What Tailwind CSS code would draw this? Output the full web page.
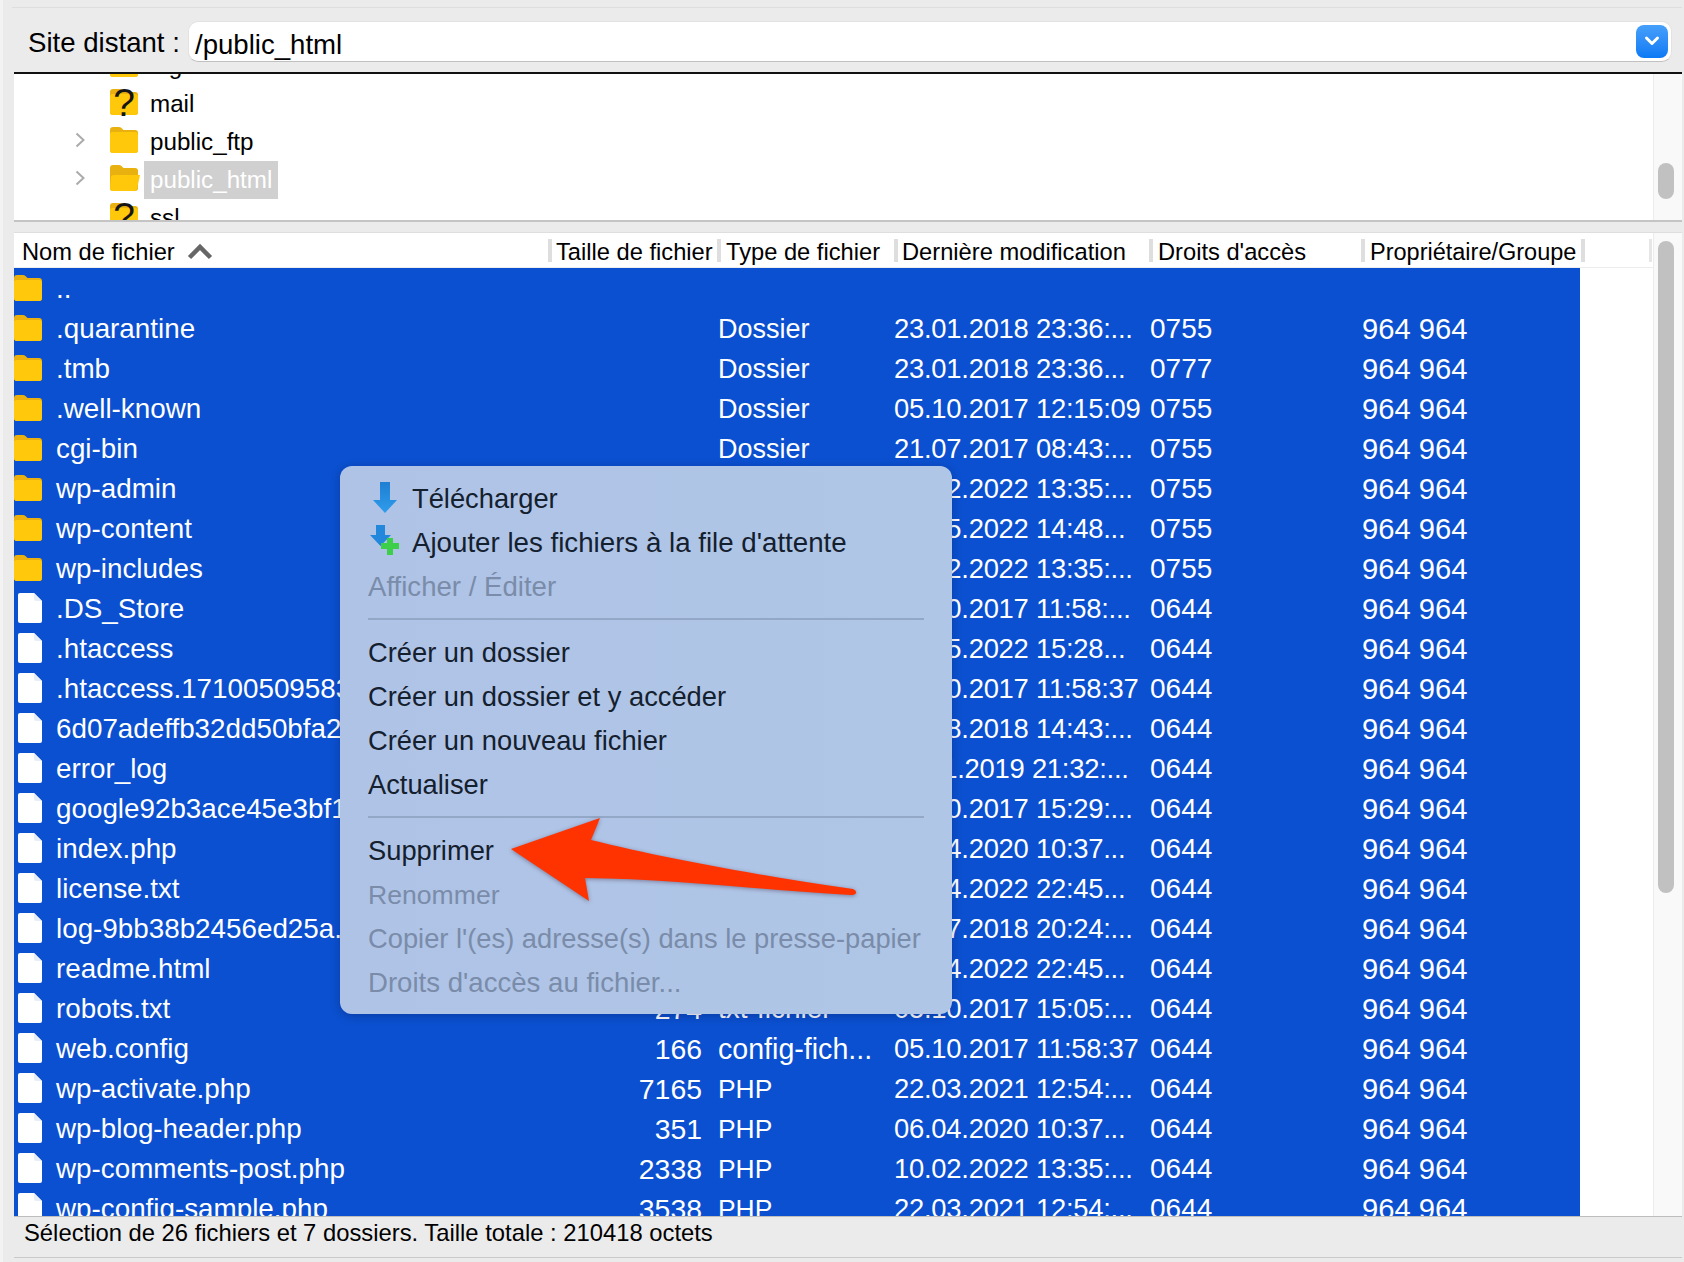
<!DOCTYPE html>
<html lang="fr">
<head>
<meta charset="utf-8">
<script src="https://cdn.jsdelivr.net/npm/@tailwindcss/browser@4"></script>
<title>FileZilla</title>
</head>
<body class="m-0">
<svg width="0" height="0" class="absolute">
  <defs>
    <symbol id="folder" viewBox="0 0 28 26">
      <path d="M0 3 Q0 0 3 0 H9 Q11 0 12.5 2 L13.5 3 H25 Q28 3 28 6 V23 Q28 26 25 26 H3 Q0 26 0 23Z" fill="#e9b10f"/>
      <path d="M0 7 Q0 5 3 5 H25 Q28 5 28 8 V23 Q28 26 25 26 H3 Q0 26 0 23Z" fill="#ffc80b"/>
    </symbol>
    <symbol id="file" viewBox="0 0 24 30">
      <path d="M2 0 H16 L24 8 V28 Q24 30 22 30 H2 Q0 30 0 28 V2 Q0 0 2 0Z" fill="#ffffff"/>
      <path d="M16 0 L24 8 H18 Q16 8 16 6Z" fill="#e8edf6"/>
    </symbol>
  </defs>
</svg>
<div class="relative w-[1684px] h-[1262px] overflow-hidden bg-[#ebebeb] border-l-[3px] border-[#f3f3f3] text-black font-['Liberation_Sans',Arial,sans-serif]">
  <div class="flex flex-col h-full pt-[7px] pl-[9px] pr-[2px] pb-[4px]">
    <!-- Remote site bar -->
    <div class="flex items-center h-[65px] shrink-0 border-t border-[#dedede] pl-[16px] pr-[10px] pt-[2px]">
      <span class="text-[27.6px] leading-none w-[160px] shrink-0 pt-[4px]">Site distant :</span>
      <div class="flex-1 h-[41px] rounded-[10px] bg-white border border-[#e2e2e2] border-b-[#c0c0c0] flex items-center justify-between pl-[6px] pr-[3px]">
        <span class="text-[27.6px] leading-none pt-[8px]">/public_html</span>
        <span class="w-[32px] h-[33px] rounded-[8px] bg-linear-to-b from-[#459ffa] to-[#0a7af5] flex items-center justify-center">
          <svg width="16" height="12" viewBox="0 0 16 12" fill="none"><path d="M2.5 3 L8 8.5 L13.5 3" stroke="#fff" stroke-width="3" stroke-linecap="round" stroke-linejoin="round"/></svg>
        </span>
      </div>
    </div>
    <!-- Tree -->
    <div class="relative h-[150px] shrink-0 ml-[2px] border-t-2 border-[#111] border-b-2 border-b-[#c4c4c4] bg-white flex overflow-hidden">
      <div class="flex-1 -mt-[27px] text-[24.2px]">
        <div class="flex items-center h-[38px] pl-[96px]">
          <span class="relative w-[28px] h-[26px] shrink-0 mb-[5px]"><svg class="w-[28px] h-[26px]"><use href="#folder"/></svg></span>
          <span class="pl-[12px]">logs</span>
        </div>
        <div class="flex items-center h-[38px] pl-[96px]">
          <span class="relative w-[28px] h-[26px] shrink-0 mb-[5px]"><svg class="w-[28px] h-[26px]"><use href="#folder"/></svg><span class="absolute left-0 right-0 -top-[6px] text-center text-[39px] leading-[39px] text-[#151515]">?</span></span>
          <span class="pl-[12px]">mail</span>
        </div>
        <div class="flex items-center h-[38px]">
          <svg class="ml-[61px] mr-[25px] mb-[4px] w-[10px] h-[16px]" viewBox="0 0 10 16" fill="none"><path d="M1.5 1.5 L8.5 8 L1.5 14.5" stroke="#ababab" stroke-width="2"/></svg>
          <svg class="w-[28px] h-[26px] mb-[5px]"><use href="#folder"/></svg>
          <span class="pl-[12px]">public_ftp</span>
        </div>
        <div class="flex items-center h-[38px]">
          <svg class="ml-[61px] mr-[25px] mb-[4px] w-[10px] h-[16px]" viewBox="0 0 10 16" fill="none"><path d="M1.5 1.5 L8.5 8 L1.5 14.5" stroke="#ababab" stroke-width="2"/></svg>
          <svg class="w-[30px] h-[26px] mb-[5px]" viewBox="0 0 30 26"><path d="M0 3 Q0 0 3 0 H9 Q11 0 12.5 2 L13.5 3 H25 Q28 3 28 6 V23 Q28 26 25 26 H3 Q0 26 0 23Z" fill="#e9b10f"/><path d="M1 12 Q1 10 4 10 H30 L27 24 Q26.500 26 24 26 H3 Q0 26 0 23Z" fill="#ffc80b"/></svg>
          <span class="ml-[4px] px-[6px] h-[38px] w-[134px] leading-[38px] bg-[#d0d0d0] text-white">public_html</span>
        </div>
        <div class="flex items-center h-[38px] pl-[96px]">
          <span class="relative w-[28px] h-[26px] shrink-0 mb-[5px]"><svg class="w-[28px] h-[26px]"><use href="#folder"/></svg><span class="absolute left-0 right-0 -top-[6px] text-center text-[39px] leading-[39px] text-[#151515]">?</span></span>
          <span class="pl-[12px]">ssl</span>
        </div>
      </div>
      <div class="w-[29px] bg-[#f9f9f9] border-l border-[#ececec] shrink-0 pt-[89px] pl-[4px]">
        <div class="w-[16px] h-[36px] rounded-full bg-[#c1c1c1]"></div>
      </div>
    </div>
    <div class="h-[10px] shrink-0"></div>
    <!-- File list -->
    <div class="relative flex-1 min-h-0 ml-[2px] flex overflow-hidden bg-white border-t border-[#dedede]">
      <div class="flex-1 min-w-0 flex flex-col">
        <div class="h-[35px] shrink-0 relative flex items-center pt-[6px] text-[23.7px] leading-none border-b border-[#ededed]">
          <span class="absolute left-[8px]">Nom de fichier</span>
          <svg class="absolute left-[173px] top-[10px] w-[26px] h-[17px]" viewBox="0 0 26 17" fill="none"><path d="M2.500 14.500 L13 4 L23.500 14.500" stroke="#666" stroke-width="4.500"/></svg>
          <span class="absolute left-[534px] top-[6px] h-[23px] w-[4px] bg-[#dedede]"></span>
          <span class="absolute left-[542px]">Taille de fichier</span>
          <span class="absolute left-[703px] top-[6px] h-[23px] w-[4px] bg-[#dedede]"></span>
          <span class="absolute left-[712px]">Type de fichier</span>
          <span class="absolute left-[880px] top-[6px] h-[23px] w-[4px] bg-[#dedede]"></span>
          <span class="absolute left-[888px]">Dernière modification</span>
          <span class="absolute left-[1135px] top-[6px] h-[23px] w-[4px] bg-[#dedede]"></span>
          <span class="absolute left-[1144px]">Droits d'accès</span>
          <span class="absolute left-[1347px] top-[6px] h-[23px] w-[4px] bg-[#dedede]"></span>
          <span class="absolute left-[1356px] text-[23.5px]">Propriétaire/Groupe</span>
          <span class="absolute left-[1567px] top-[6px] h-[23px] w-[4px] bg-[#dedede]"></span>
          <span class="absolute left-[1635px] top-[6px] h-[23px] w-[3px] bg-[#e6e6e6]"></span>
        </div>
        <div class="flex-1 min-h-0 overflow-hidden w-[1566px] bg-[#0b50d0] text-white text-[28.4px] leading-[40px] whitespace-nowrap [&>div>span:not(:first-child)]:translate-y-px [&>div>span:nth-child(2)]:text-[27.8px] [&>div>span:nth-child(4)]:text-[27px] [&>div>span:nth-child(5)]:text-[27.4px] [&>div>span:nth-child(5)]:tracking-[-0.25px] [&>div>span:nth-child(6)]:text-[28px] [&>div>span:nth-child(7)]:text-[29.2px]">
          <div class="grid grid-cols-[42px_484px_162px_192px_256px_212px_218px] h-[40px]"><span class="flex items-center"><svg class="w-[28px] h-[26px]"><use href="#folder"/></svg></span><span>..</span><span class="text-right"></span><span class="pl-[16px]"></span><span></span><span></span><span></span></div>
          <div class="grid grid-cols-[42px_484px_162px_192px_256px_212px_218px] h-[40px]"><span class="flex items-center"><svg class="w-[28px] h-[26px]"><use href="#folder"/></svg></span><span>.quarantine</span><span class="text-right"></span><span class="pl-[16px]">Dossier</span><span>23.01.2018 23:36:...</span><span>0755</span><span>964 964</span></div>
          <div class="grid grid-cols-[42px_484px_162px_192px_256px_212px_218px] h-[40px]"><span class="flex items-center"><svg class="w-[28px] h-[26px]"><use href="#folder"/></svg></span><span>.tmb</span><span class="text-right"></span><span class="pl-[16px]">Dossier</span><span>23.01.2018 23:36...</span><span>0777</span><span>964 964</span></div>
          <div class="grid grid-cols-[42px_484px_162px_192px_256px_212px_218px] h-[40px]"><span class="flex items-center"><svg class="w-[28px] h-[26px]"><use href="#folder"/></svg></span><span>.well-known</span><span class="text-right"></span><span class="pl-[16px]">Dossier</span><span>05.10.2017 12:15:09</span><span>0755</span><span>964 964</span></div>
          <div class="grid grid-cols-[42px_484px_162px_192px_256px_212px_218px] h-[40px]"><span class="flex items-center"><svg class="w-[28px] h-[26px]"><use href="#folder"/></svg></span><span>cgi-bin</span><span class="text-right"></span><span class="pl-[16px]">Dossier</span><span>21.07.2017 08:43:...</span><span>0755</span><span>964 964</span></div>
          <div class="grid grid-cols-[42px_484px_162px_192px_256px_212px_218px] h-[40px]"><span class="flex items-center"><svg class="w-[28px] h-[26px]"><use href="#folder"/></svg></span><span>wp-admin</span><span class="text-right"></span><span class="pl-[16px]">Dossier</span><span>10.02.2022 13:35:...</span><span>0755</span><span>964 964</span></div>
          <div class="grid grid-cols-[42px_484px_162px_192px_256px_212px_218px] h-[40px]"><span class="flex items-center"><svg class="w-[28px] h-[26px]"><use href="#folder"/></svg></span><span>wp-content</span><span class="text-right"></span><span class="pl-[16px]">Dossier</span><span>17.05.2022 14:48...</span><span>0755</span><span>964 964</span></div>
          <div class="grid grid-cols-[42px_484px_162px_192px_256px_212px_218px] h-[40px]"><span class="flex items-center"><svg class="w-[28px] h-[26px]"><use href="#folder"/></svg></span><span>wp-includes</span><span class="text-right"></span><span class="pl-[16px]">Dossier</span><span>10.02.2022 13:35:...</span><span>0755</span><span>964 964</span></div>
          <div class="grid grid-cols-[42px_484px_162px_192px_256px_212px_218px] h-[40px]"><span class="flex items-center pl-[4px]"><svg class="w-[24px] h-[30px]"><use href="#file"/></svg></span><span>.DS_Store</span><span class="text-right"></span><span class="pl-[16px]">Fichier</span><span>05.10.2017 11:58:...</span><span>0644</span><span>964 964</span></div>
          <div class="grid grid-cols-[42px_484px_162px_192px_256px_212px_218px] h-[40px]"><span class="flex items-center pl-[4px]"><svg class="w-[24px] h-[30px]"><use href="#file"/></svg></span><span>.htaccess</span><span class="text-right"></span><span class="pl-[16px]">Fichier</span><span>17.05.2022 15:28...</span><span>0644</span><span>964 964</span></div>
          <div class="grid grid-cols-[42px_484px_162px_192px_256px_212px_218px] h-[40px]"><span class="flex items-center pl-[4px]"><svg class="w-[24px] h-[30px]"><use href="#file"/></svg></span><span>.htaccess.1710050958365</span><span class="text-right"></span><span class="pl-[16px]">Fichier</span><span>05.10.2017 11:58:37</span><span>0644</span><span>964 964</span></div>
          <div class="grid grid-cols-[42px_484px_162px_192px_256px_212px_218px] h-[40px]"><span class="flex items-center pl-[4px]"><svg class="w-[24px] h-[30px]"><use href="#file"/></svg></span><span>6d07adeffb32dd50bfa2.txt</span><span class="text-right"></span><span class="pl-[16px]">Fichier</span><span>13.08.2018 14:43:...</span><span>0644</span><span>964 964</span></div>
          <div class="grid grid-cols-[42px_484px_162px_192px_256px_212px_218px] h-[40px]"><span class="flex items-center pl-[4px]"><svg class="w-[24px] h-[30px]"><use href="#file"/></svg></span><span>error_log</span><span class="text-right"></span><span class="pl-[16px]">Fichier</span><span>11.11.2019 21:32:...</span><span>0644</span><span>964 964</span></div>
          <div class="grid grid-cols-[42px_484px_162px_192px_256px_212px_218px] h-[40px]"><span class="flex items-center pl-[4px]"><svg class="w-[24px] h-[30px]"><use href="#file"/></svg></span><span>google92b3ace45e3bf1.html</span><span class="text-right"></span><span class="pl-[16px]">Fichier</span><span>05.10.2017 15:29:...</span><span>0644</span><span>964 964</span></div>
          <div class="grid grid-cols-[42px_484px_162px_192px_256px_212px_218px] h-[40px]"><span class="flex items-center pl-[4px]"><svg class="w-[24px] h-[30px]"><use href="#file"/></svg></span><span>index.php</span><span class="text-right"></span><span class="pl-[16px]">PHP</span><span>06.04.2020 10:37...</span><span>0644</span><span>964 964</span></div>
          <div class="grid grid-cols-[42px_484px_162px_192px_256px_212px_218px] h-[40px]"><span class="flex items-center pl-[4px]"><svg class="w-[24px] h-[30px]"><use href="#file"/></svg></span><span>license.txt</span><span class="text-right"></span><span class="pl-[16px]">Fichier</span><span>14.04.2022 22:45...</span><span>0644</span><span>964 964</span></div>
          <div class="grid grid-cols-[42px_484px_162px_192px_256px_212px_218px] h-[40px]"><span class="flex items-center pl-[4px]"><svg class="w-[24px] h-[30px]"><use href="#file"/></svg></span><span>log-9bb38b2456ed25a.txt</span><span class="text-right"></span><span class="pl-[16px]">Fichier</span><span>17.07.2018 20:24:...</span><span>0644</span><span>964 964</span></div>
          <div class="grid grid-cols-[42px_484px_162px_192px_256px_212px_218px] h-[40px]"><span class="flex items-center pl-[4px]"><svg class="w-[24px] h-[30px]"><use href="#file"/></svg></span><span>readme.html</span><span class="text-right"></span><span class="pl-[16px]">Fichier</span><span>14.04.2022 22:45...</span><span>0644</span><span>964 964</span></div>
          <div class="grid grid-cols-[42px_484px_162px_192px_256px_212px_218px] h-[40px]"><span class="flex items-center pl-[4px]"><svg class="w-[24px] h-[30px]"><use href="#file"/></svg></span><span>robots.txt</span><span class="text-right">274</span><span class="pl-[16px] text-[28px]!">txt-fichier</span><span>05.10.2017 15:05:...</span><span>0644</span><span>964 964</span></div>
          <div class="grid grid-cols-[42px_484px_162px_192px_256px_212px_218px] h-[40px]"><span class="flex items-center pl-[4px]"><svg class="w-[24px] h-[30px]"><use href="#file"/></svg></span><span>web.config</span><span class="text-right">166</span><span class="pl-[16px] text-[28.6px]!">config-fich...</span><span>05.10.2017 11:58:37</span><span>0644</span><span>964 964</span></div>
          <div class="grid grid-cols-[42px_484px_162px_192px_256px_212px_218px] h-[40px]"><span class="flex items-center pl-[4px]"><svg class="w-[24px] h-[30px]"><use href="#file"/></svg></span><span>wp-activate.php</span><span class="text-right">7165</span><span class="pl-[16px] text-[26.4px]!">PHP</span><span>22.03.2021 12:54:...</span><span>0644</span><span>964 964</span></div>
          <div class="grid grid-cols-[42px_484px_162px_192px_256px_212px_218px] h-[40px]"><span class="flex items-center pl-[4px]"><svg class="w-[24px] h-[30px]"><use href="#file"/></svg></span><span>wp-blog-header.php</span><span class="text-right">351</span><span class="pl-[16px] text-[26.4px]!">PHP</span><span>06.04.2020 10:37...</span><span>0644</span><span>964 964</span></div>
          <div class="grid grid-cols-[42px_484px_162px_192px_256px_212px_218px] h-[40px]"><span class="flex items-center pl-[4px]"><svg class="w-[24px] h-[30px]"><use href="#file"/></svg></span><span>wp-comments-post.php</span><span class="text-right">2338</span><span class="pl-[16px] text-[26.4px]!">PHP</span><span>10.02.2022 13:35:...</span><span>0644</span><span>964 964</span></div>
          <div class="grid grid-cols-[42px_484px_162px_192px_256px_212px_218px] h-[40px]"><span class="flex items-center pl-[4px]"><svg class="w-[24px] h-[30px]"><use href="#file"/></svg></span><span>wp-config-sample.php</span><span class="text-right">3538</span><span class="pl-[16px] text-[26.4px]!">PHP</span><span>22.03.2021 12:54:...</span><span>0644</span><span>964 964</span></div>
        </div>
      </div>
      <div class="w-[29px] bg-[#f9f9f9] border-l border-[#ececec] shrink-0 pt-[8px] pl-[4px]">
        <div class="w-[16px] h-[652px] rounded-full bg-[#c1c1c1]"></div>
      </div>
    </div>
    <!-- Status bar -->
    <div class="h-[42px] shrink-0 border-t-[1px] border-[#bdbdbd] border-b border-b-[#c9c9c9] ml-[2px] text-[23.8px] leading-none pl-[10px] pt-[4px] bg-[#ebebeb]">
      Sélection de 26 fichiers et 7 dossiers. Taille totale : 210418 octets
    </div>
  </div>

  <!-- Context menu -->
  <div class="absolute left-[337px] top-[466px] w-[612px] h-[548px] rounded-[12px] bg-linear-to-r from-[#afc3e6] to-[#afc6e6] shadow-[0_2px_10px_rgba(0,0,30,0.25)] pt-[11px] px-[28px] text-[27.3px] leading-[44px] text-[#14202e] whitespace-nowrap">
    <div class="relative h-[44px] pl-[44px]">
      <svg class="absolute left-[5px] top-[5px] w-[24px] h-[31px]" viewBox="0 0 24 31"><defs><linearGradient id="dl" x1="0" y1="0" x2="0" y2="1"><stop offset="0" stop-color="#1f7fd2"/><stop offset="1" stop-color="#2f9cec"/></linearGradient></defs><path d="M7 0 H17 V18 H24 L12 31 L0 18 H7Z" fill="url(#dl)"/></svg>
      Télécharger
    </div>
    <div class="relative h-[44px] pl-[44px] text-[27.7px]">
      <svg class="absolute left-[2px] top-[4px] w-[30px] h-[31px]" viewBox="0 0 30 31"><path d="M6 0 H15 V10 H21 L10.500 21 L0 10 H6Z" fill="#2388db"/><path d="M17 13 H23 V18 H29 V24 H23 V30 H17 V24 H11 V18 H17Z" fill="#3ecf4a"/></svg>
      Ajouter les fichiers à la file d'attente
    </div>
    <div class="h-[44px] text-[#7a8ca9] text-[27.6px]">Afficher / Éditer</div>
    <div class="h-[22px] flex items-center pb-[3px]"><div class="w-full h-[2px] bg-[#93a7c6]"></div></div>
    <div class="h-[44px]">Créer un dossier</div>
    <div class="h-[44px]">Créer un dossier et y accéder</div>
    <div class="h-[44px]">Créer un nouveau fichier</div>
    <div class="h-[44px]">Actualiser</div>
    <div class="h-[22px] flex items-center pb-[3px]"><div class="w-full h-[2px] bg-[#93a7c6]"></div></div>
    <div class="h-[44px]">Supprimer</div>
    <div class="h-[44px] text-[#7a8ca9] text-[26.6px]">Renommer</div>
    <div class="h-[44px] text-[#7a8ca9]">Copier l'(es) adresse(s) dans le presse-papier</div>
    <div class="h-[44px] text-[#7a8ca9] text-[27.6px]">Droits d'accès au fichier...</div>
  </div>

  <!-- Red arrow annotation -->
  <svg class="absolute left-[500px] top-[812px] w-[365px] h-[100px] drop-shadow-[0_1px_2px_rgba(60,30,60,0.45)]" viewBox="500 812 365 100">
    <path d="M508 849 L597 818 L588 840 C660 858 760 876 850 889 Q854 891 853 893 Q852 895 848 895 C760 890 670 879 582 878 L586 901 Z" fill="#ff3300"/>
  </svg>
</div>
</body>
</html>
